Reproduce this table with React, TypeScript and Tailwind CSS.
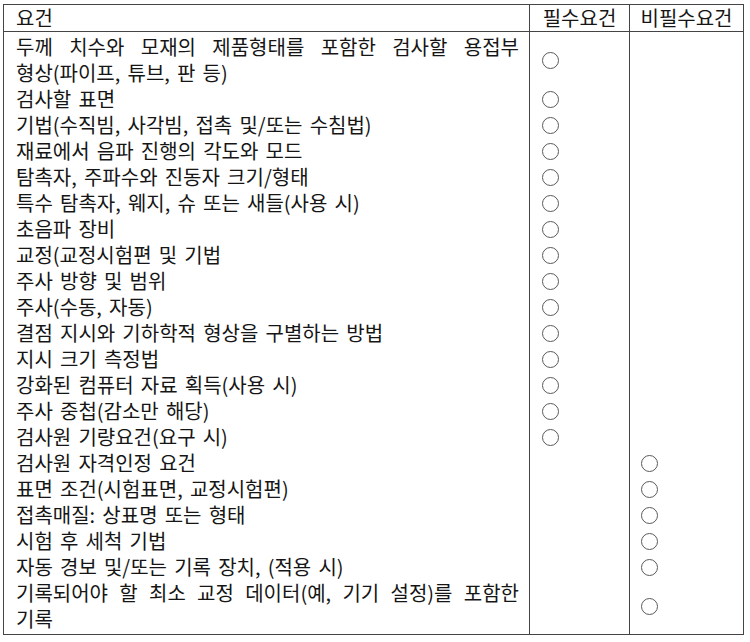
import React from "react";

type Row = { lines: string[]; col: 1 | 2 };

const rows: Row[] = [
  { lines: ["두께 치수와 모재의 제품형태를 포함한 검사할 용접부", "형상(파이프, 튜브, 판 등)"], col: 1 },
  { lines: ["검사할 표면"], col: 1 },
  { lines: ["기법(수직빔, 사각빔, 접촉 및/또는 수침법)"], col: 1 },
  { lines: ["재료에서 음파 진행의 각도와 모드"], col: 1 },
  { lines: ["탐촉자, 주파수와 진동자 크기/형태"], col: 1 },
  { lines: ["특수 탐촉자, 웨지, 슈 또는 새들(사용 시)"], col: 1 },
  { lines: ["초음파 장비"], col: 1 },
  { lines: ["교정(교정시험편 및 기법"], col: 1 },
  { lines: ["주사 방향 및 범위"], col: 1 },
  { lines: ["주사(수동, 자동)"], col: 1 },
  { lines: ["결점 지시와 기하학적 형상을 구별하는 방법"], col: 1 },
  { lines: ["지시 크기 측정법"], col: 1 },
  { lines: ["강화된 컴퓨터 자료 획득(사용 시)"], col: 1 },
  { lines: ["주사 중첩(감소만 해당)"], col: 1 },
  { lines: ["검사원 기량요건(요구 시)"], col: 1 },
  { lines: ["검사원 자격인정 요건"], col: 2 },
  { lines: ["표면 조건(시험표면, 교정시험편)"], col: 2 },
  { lines: ["접촉매질: 상표명 또는 형태"], col: 2 },
  { lines: ["시험 후 세척 기법"], col: 2 },
  { lines: ["자동 경보 및/또는 기록 장치, (적용 시)"], col: 2 },
  { lines: ["기록되어야 할 최소 교정 데이터(예, 기기 설정)를 포함한", "기록"], col: 2 },
];

function Circle() {
  return <div className="w-[17px] h-[17px] rounded-full border border-[#5a5a5a]" />;
}

export default function App() {
  return (
    <div
      className="bg-white w-[750px] h-[642px] pt-[4px] pl-[3px] text-[#151515]"
      style={{ fontFamily: '"Noto Sans CJK KR", "Noto Sans", sans-serif' }}
    >
      <table className="w-[740px] border-collapse border border-[#444] text-[20px] leading-[26px] [word-spacing:2.7px] table-fixed">
        <colgroup>
          <col className="w-[526px]" />
          <col className="w-[100px]" />
          <col className="w-[114px]" />
        </colgroup>
        <thead>
          <tr className="border-b border-[#444]">
            <th className="font-normal text-left pl-[12px] pr-[10px] h-[26px] p-0">요건</th>
            <th className="font-normal text-center border-l border-[#444] p-0">필수요건</th>
            <th className="font-normal text-center border-l border-[#444] p-0">비필수요건</th>
          </tr>
        </thead>
        <tbody>
          {rows.map((r, i) => {
            const first = i === 0;
            const last = i === rows.length - 1;
            const pad = first ? "pt-[2px]" : last ? "pb-[2px]" : "";
            return (
              <tr key={i}>
                <td className={`pl-[12px] pr-[10px] align-middle ${pad}`}>
                  {r.lines.map((l, j) =>
                    r.lines.length > 1 && j === 0 ? (
                      <div key={j} className="text-justify [text-align-last:justify] whitespace-nowrap">
                        {l}
                      </div>
                    ) : (
                      <div key={j}>{l}</div>
                    )
                  )}
                </td>
                <td className={`border-l border-[#444] pl-[12px] align-middle ${pad}`}>
                  {r.col === 1 ? <Circle /> : null}
                </td>
                <td className={`border-l border-[#444] pl-[11px] align-middle ${pad}`}>
                  {r.col === 2 ? <Circle /> : null}
                </td>
              </tr>
            );
          })}
        </tbody>
      </table>
    </div>
  );
}
